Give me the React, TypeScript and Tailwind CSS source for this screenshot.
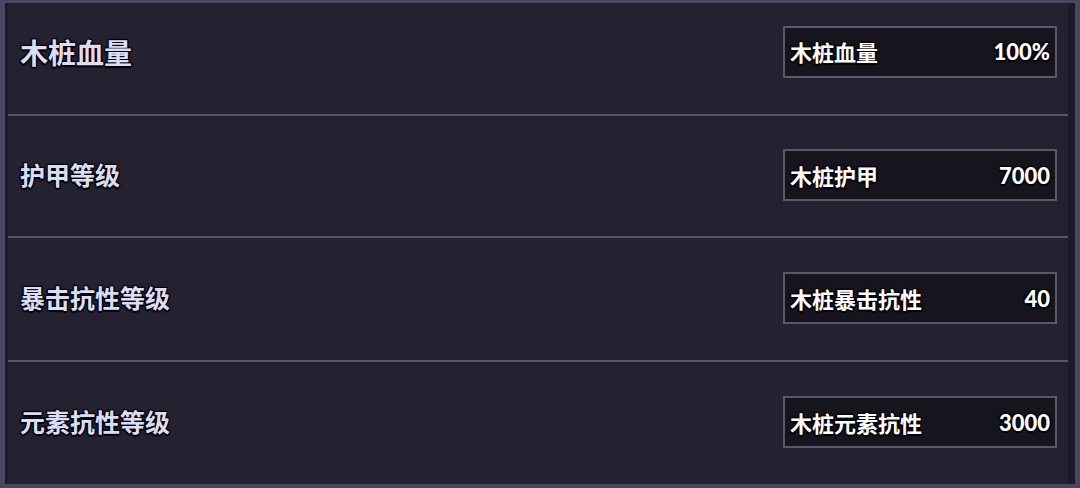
import React from "react";

type Row = { label: string; name: string; value: string; h: string };

const rows: Row[] = [
  { label: "护甲等级", name: "木桩护甲", value: "7000", h: "h-[120px]" },
  { label: "暴击抗性等级", name: "木桩暴击抗性", value: "40", h: "h-[122px]" },
  { label: "元素抗性等级", name: "木桩元素抗性", value: "3000", h: "flex-1" },
];

const outline =
  "[text-shadow:0_0_2px_#05040a,1px_1px_1px_#05040a,-1px_-1px_1px_#05040a,1px_-1px_1px_#05040a,-1px_1px_1px_#05040a,0_2px_1px_#05040a]";

function ValueBox({ name, value }: { name: string; value: string }) {
  return (
    <div
      className={`flex h-[52px] w-[274px] items-center justify-between border-2 border-[#5a5769] bg-[#16141d] px-[5px] text-[22px] font-bold text-white ${outline}`}
    >
      <span>{name}</span>
      <span style={{ fontFamily: "Lato, sans-serif" }} className="text-[22px] font-black">
        {value}
      </span>
    </div>
  );
}

export default function App() {
  return (
    <div
      className="h-[488px] w-[1080px] bg-[#4a4563] pb-[4px] pl-[5px] pr-[5px] pt-[3px]"
      style={{ fontFamily: '"Noto Sans CJK SC", "Noto Sans", sans-serif' }}
    >
      <div className="flex h-full flex-col border-l-[3px] border-r-[7px] border-[#1c1a26] bg-[#242231]">
        <div className="flex h-[111px] items-center justify-between pb-[14px] pl-[12px] pr-[11px]">
          <span className={`text-[28px] font-bold text-[#dcdcf4] ${outline}`}>
            木桩血量
          </span>
          <ValueBox name="木桩血量" value="100%" />
        </div>
        {rows.map((r) => (
          <React.Fragment key={r.label}>
            <div className="h-[2px] bg-[#58556e]" />
            <div className={`flex ${r.h} items-center justify-between pb-[2px] pl-[12px] pr-[11px]`}>
              <span className={`text-[25px] font-bold text-[#dcdcf4] ${outline}`}>
                {r.label}
              </span>
              <ValueBox name={r.name} value={r.value} />
            </div>
          </React.Fragment>
        ))}
      </div>
    </div>
  );
}
